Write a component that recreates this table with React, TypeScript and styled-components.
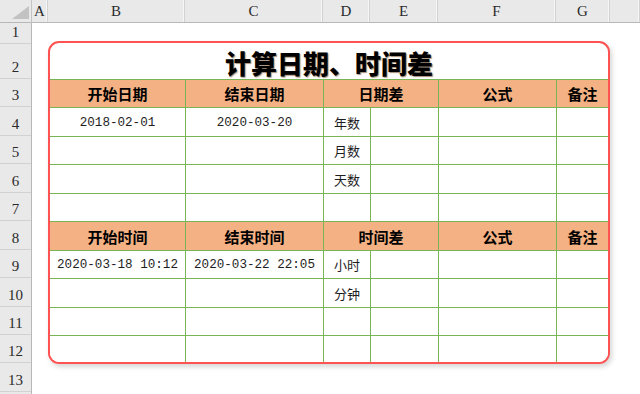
import styled, { createGlobalStyle } from "styled-components";

const GlobalStyle = createGlobalStyle`
  html, body {
    margin: 0;
    padding: 0;
    background: #ffffff;
  }
  * {
    box-sizing: border-box;
  }
`;

const columns = [
  { label: "A", width: 16 },
  { label: "B", width: 137 },
  { label: "C", width: 138 },
  { label: "D", width: 47 },
  { label: "E", width: 68 },
  { label: "F", width: 118 },
  { label: "G", width: 54 },
  { label: "", width: 0 },
];

const rowHeights = [21, 35, 28, 29, 28, 29, 28, 29, 28, 29, 28, 28, 29, 10];

type CellData = { text: string; span?: number };

const blank = (label = ""): CellData[] => [
  { text: "" },
  { text: "" },
  { text: label },
  { text: "" },
  { text: "" },
  { text: "" },
];

const tableRows: { head?: boolean; cells: CellData[] }[] = [
  {
    head: true,
    cells: [
      { text: "开始日期" },
      { text: "结束日期" },
      { text: "日期差", span: 2 },
      { text: "公式" },
      { text: "备注" },
    ],
  },
  {
    cells: [
      { text: "2018-02-01" },
      { text: "2020-03-20" },
      { text: "年数" },
      { text: "" },
      { text: "" },
      { text: "" },
    ],
  },
  { cells: blank("月数") },
  { cells: blank("天数") },
  { cells: blank() },
  {
    head: true,
    cells: [
      { text: "开始时间" },
      { text: "结束时间" },
      { text: "时间差", span: 2 },
      { text: "公式" },
      { text: "备注" },
    ],
  },
  {
    cells: [
      { text: "2020-03-18 10:12" },
      { text: "2020-03-22 22:05" },
      { text: "小时" },
      { text: "" },
      { text: "" },
      { text: "" },
    ],
  },
  { cells: blank("分钟") },
  { cells: blank() },
  { cells: blank() },
];

const Sheet = styled.div`
  width: 640px;
  height: 394px;
  overflow: hidden;
  display: grid;
  grid-template-columns: 32px 1fr;
  grid-template-rows: 23px 1fr;
  background: #ffffff;
`;

const Corner = styled.div`
  background: #e9e9e9;
  border-right: 1px solid #c4c4c4;
  border-bottom: 1px solid #b8b8b8;
  display: flex;
  align-items: flex-end;
  justify-content: flex-end;
  padding: 0 2px 3px 0;
`;

const ColumnBar = styled.div`
  display: flex;
  background: #e9e9e9;
  border-bottom: 1px solid #b8b8b8;
`;

const ColumnLabel = styled.div<{ $w: number }>`
  flex: ${(p) => (p.$w ? `0 0 ${p.$w}px` : "1 1 auto")};
  border-right: 1px solid #d2d2d2;
  box-shadow: inset -1px 0 0 #f6f6f6;
  display: flex;
  align-items: center;
  justify-content: center;
  padding-top: 1px;
  font-family: "Liberation Serif", serif;
  font-size: 15px;
  color: #2b2b2b;
`;

const RowBar = styled.div`
  display: flex;
  flex-direction: column;
  background: #e9e9e9;
  border-right: 1px solid #b8b8b8;
`;

const RowLabel = styled.div<{ $h: number }>`
  flex: 0 0 ${(p) => p.$h}px;
  border-bottom: 1px solid #d2d2d2;
  display: flex;
  align-items: flex-end;
  justify-content: center;
  padding-bottom: 2px;
  font-family: "Liberation Serif", serif;
  font-size: 15px;
  color: #2b2b2b;
`;

const Canvas = styled.div`
  background: #ffffff;
  padding: 18px 0 0 16px;
`;

const Card = styled.div`
  width: 562px;
  height: 323px;
  border: 2px solid #ff5252;
  border-radius: 11px;
  overflow: hidden;
  background: #ffffff;
  box-shadow: 2px 3px 5px rgba(0, 0, 0, 0.16);
  display: flex;
  flex-direction: column;
`;

const Title = styled.div`
  height: 36px;
  display: flex;
  align-items: center;
  justify-content: center;
  padding-top: 2px;
  font-family: "Noto Sans CJK SC", sans-serif;
  font-weight: 900;
  font-size: 26px;
  color: #000000;
  text-shadow: 1px 1px 1px rgba(90, 50, 10, 0.55);
`;

const Table = styled.div`
  display: grid;
  grid-template-columns: 135px 138px 47px 68px 118px 52px;
  grid-template-rows: 28px 29px 28px 29px 28px 29px 28px 29px 28px 27px;
`;

const Cell = styled.div<{
  $head?: boolean;
  $first?: boolean;
  $span?: number;
  $mono?: boolean;
}>`
  grid-column: span ${(p) => p.$span || 1};
  border-top: 1px solid #7ab555;
  border-left: ${(p) => (p.$first ? "none" : "1px solid #7ab555")};
  background: ${(p) => (p.$head ? "#f4b183" : "#ffffff")};
  display: flex;
  align-items: center;
  justify-content: center;
  padding-top: ${(p) => (p.$mono ? "3px" : "1px")};
  white-space: nowrap;
  line-height: 1.2;
  font-family: ${(p) =>
    p.$mono
      ? `"Liberation Mono", monospace`
      : `"Noto Sans CJK SC", sans-serif`};
  font-weight: ${(p) => (p.$head ? 700 : 400)};
  font-size: ${(p) => (p.$head ? "15px" : p.$mono ? "12.6px" : "13px")};
  color: ${(p) => (p.$head ? "#000000" : "#1e1e1e")};
`;

const CornerMark = () => (
  <svg width="17" height="13" viewBox="0 0 17 13">
    <polygon points="0,13 17,13 17,0" fill="#c2c2c2" />
  </svg>
);

const App = () => {
  return (
    <>
      <GlobalStyle />
      <Sheet>
        <Corner>
          <CornerMark />
        </Corner>
        <ColumnBar>
          {columns.map((c, i) => (
            <ColumnLabel key={i} $w={c.width}>
              {c.label}
            </ColumnLabel>
          ))}
        </ColumnBar>
        <RowBar>
          {rowHeights.map((h, i) => (
            <RowLabel key={i} $h={h}>
              {i < 13 ? i + 1 : ""}
            </RowLabel>
          ))}
        </RowBar>
        <Canvas>
          <Card>
            <Title>计算日期、时间差</Title>
            <Table>
              {tableRows.map((row, r) =>
                row.cells.map((cell, c) => (
                  <Cell
                    key={`${r}-${c}`}
                    $head={row.head}
                    $first={c === 0}
                    $span={cell.span}
                    $mono={/^[\d\-: ]+$/.test(cell.text)}
                  >
                    {cell.text}
                  </Cell>
                ))
              )}
            </Table>
          </Card>
        </Canvas>
      </Sheet>
    </>
  );
};

export default App;
